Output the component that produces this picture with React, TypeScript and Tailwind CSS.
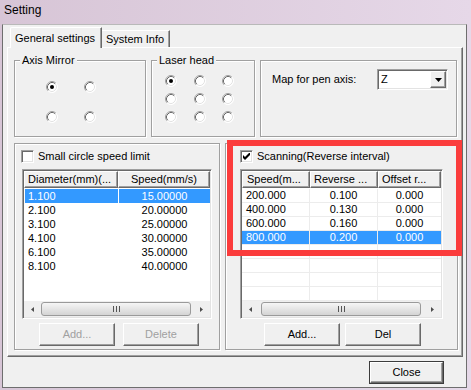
import React from 'react';

const raised =
  'border border-t-white border-l-white border-r-[#696969] border-b-[#696969] shadow-[inset_-1px_-1px_0_#a0a0a0]';
const sunken =
  'border border-t-[#a0a0a0] border-l-[#a0a0a0] border-r-white border-b-white shadow-[inset_1px_1px_0_#696969,inset_-1px_-1px_0_#e3e3e3] p-[1px]';
const etched = 'border border-[#a0a0a0] shadow-[inset_1px_1px_0_#fff,1px_1px_0_#fff]';

const Radio = ({ checked = false }: { checked?: boolean }) => (
  <svg width="12" height="12" viewBox="0 0 12 12" className="block">
    <circle cx="6" cy="6" r="5.5" fill="#fff" />
    <path d="M2.11 9.89A5.5 5.5 0 0 1 9.89 2.11" fill="none" stroke="#a0a0a0" />
    <path d="M9.89 2.11A5.5 5.5 0 0 1 2.11 9.89" fill="none" stroke="#fff" />
    <path d="M2.82 9.18A4.5 4.5 0 0 1 9.18 2.82" fill="none" stroke="#696969" />
    <path d="M9.18 2.82A4.5 4.5 0 0 1 2.82 9.18" fill="none" stroke="#e3e3e3" />
    {checked && <circle cx="6" cy="6" r="2" fill="#000" />}
  </svg>
);

const Checkbox = ({ checked = false }: { checked?: boolean }) => (
  <div className={`w-[13px] h-[13px] bg-white flex items-center justify-center ${sunken}`}>
    {checked && (
      <svg width="7" height="7" viewBox="0 0 7 7" className="block">
        <path d="M0 2L2 4L7 -1L7 2L2 7L0 5Z" fill="#000" />
      </svg>
    )}
  </div>
);

const Group = ({
  label,
  className,
  children,
}: {
  label?: string;
  className: string;
  children?: React.ReactNode;
}) => (
  <div className={`flex flex-col ${etched} ${className}`}>
    {label && (
      <div className="-mt-[8px] -mb-[6px] ml-[5px] self-start h-[14px] px-[2px] bg-[#f0f0f0] leading-[14px]">
        {label}
      </div>
    )}
    {children}
  </div>
);

const Button = ({
  children,
  disabled = false,
  className = '',
}: {
  children: React.ReactNode;
  disabled?: boolean;
  className?: string;
}) => (
  <div
    className={`w-[76px] h-[23px] flex items-center justify-center bg-[#f0f0f0] ${raised} ${
      disabled ? 'text-[#a0a0a0]' : ''
    } ${className}`}
  >
    {children}
  </div>
);

const Scrollbar = ({ thumb }: { thumb: string }) => (
  <div className="flex h-[16px] bg-[#efefef] shrink-0">
    <div className="w-[17px] flex items-center justify-center">
      <svg width="3" height="5" viewBox="0 0 3 5" className="block">
        <path d="M3 0L0 2.5L3 5Z" fill="#4d4d4d" />
      </svg>
    </div>
    <div
      className={`my-[1px] rounded-[3px] border border-[#9a9a9a] bg-linear-to-b from-[#f6f6f6] to-[#d4d4d4] flex items-center justify-center ${thumb}`}
    >
      <svg width="7" height="6" viewBox="0 0 7 6" className="block">
        <rect x="0" y="0" width="1" height="6" fill="#555" />
        <rect x="3" y="0" width="1" height="6" fill="#555" />
        <rect x="6" y="0" width="1" height="6" fill="#555" />
      </svg>
    </div>
    <div className="flex-1" />
    <div className="w-[17px] flex items-center justify-center">
      <svg width="3" height="5" viewBox="0 0 3 5" className="block">
        <path d="M0 0L3 2.5L0 5Z" fill="#4d4d4d" />
      </svg>
    </div>
  </div>
);

const headerCell = `flex items-center h-[17px] bg-[#f0f0f0] whitespace-nowrap overflow-hidden ${raised}`;

const diameterRows = [
  ['1.100', '15.00000'],
  ['2.100', '20.00000'],
  ['3.100', '25.00000'],
  ['4.100', '30.00000'],
  ['6.100', '35.00000'],
  ['8.100', '40.00000'],
];

const scanRows = [
  ['200.000', '0.100', '0.000'],
  ['400.000', '0.130', '0.000'],
  ['600.000', '0.160', '0.000'],
  ['800.000', '0.200', '0.000'],
];

const sel = 'bg-[#3399ff] text-white';

export default function App() {
  return (
    <div className="relative w-[471px] h-[390px] overflow-hidden bg-linear-to-r from-[#d7c5d6] to-[#e6d8e8] font-['Liberation_Sans',Arial,sans-serif] text-[11px] text-black">
      <div className="h-[24px] pl-[4px] pt-[3px] text-[12px] leading-[14px]">Setting</div>

      <div className="ml-[2px] w-[465px] h-[364px] bg-[#f0f0f0] border border-[#6e6e6e] border-t-[#b9b9b9] flex flex-col">
        {/* tabs */}
        <div className="flex items-end h-[20px] mt-[2px] ml-[7px]">
          <div className="relative -mb-[1px] h-[21px] w-[92px] pl-[4px] flex items-center bg-[#f0f0f0] border-t border-l border-r border-t-white border-l-white border-r-[#696969] shadow-[inset_-1px_0_0_#a0a0a0] rounded-tl-[2px]">
            General settings
          </div>
          <div className="h-[17px] w-[68px] pl-[4px] flex items-center border-t border-r border-t-white border-r-[#696969] shadow-[inset_-1px_0_0_#a0a0a0]">
            System Info
          </div>
        </div>

        {/* tab panel */}
        <div className="ml-[4px] w-[456px] h-[310px] bg-[#f0f0f0] border border-t-white border-l-white border-r-[#696969] border-b-[#696969] shadow-[inset_-1px_-1px_0_#a0a0a0] flex flex-col pl-[6px] pt-[12px]">
          <div className="flex items-start gap-[5px]">
            <Group label="Axis Mirror" className="w-[132px] h-[77px]">
              <div className="grid grid-cols-[38px_12px] gap-y-[18px] mt-[20px] ml-[31px]">
                <Radio checked />
                <Radio />
                <Radio />
                <Radio />
              </div>
            </Group>
            <Group label="Laser head" className="w-[104px] h-[77px]">
              <div className="grid grid-cols-[29px_28px_12px] gap-y-[6px] mt-[14px] ml-[13px]">
                <Radio checked />
                <Radio />
                <Radio />
                <Radio />
                <Radio />
                <Radio />
                <Radio />
                <Radio />
                <Radio />
              </div>
            </Group>
            <Group className="w-[197px] h-[77px]">
              <div className="flex items-center mt-[8px] pl-[11px]">
                <div className="w-[105px]">Map for pen axis:</div>
                <div className={`w-[71px] h-[21px] bg-white flex ${sunken}`}>
                  <div className="flex-1 pl-[2px] flex items-center">Z</div>
                  <div className={`w-[16px] h-[17px] bg-[#f0f0f0] flex items-center justify-center ${raised}`}>
                    <svg width="7" height="4" viewBox="0 0 7 4" className="block">
                      <path d="M0 0H7L3.5 4Z" fill="#000" />
                    </svg>
                  </div>
                </div>
              </div>
            </Group>
          </div>

          <div className="flex items-start gap-[5px] mt-[6px]">
            {/* small circle speed limit */}
            <Group className="w-[206px] h-[207px]">
              <div className="flex items-center h-[13px] mt-[6px] ml-[6px]">
                <Checkbox />
                <span className="ml-[4px] leading-[13px]">Small circle speed limit</span>
              </div>
              <div className={`mt-[6px] ml-[7px] w-[190px] h-[150px] bg-white flex flex-col ${sunken}`}>
                <div className="flex shrink-0">
                  <div className={`${headerCell} w-[94px] pl-[3px]`}>Diameter(mm)(...</div>
                  <div className={`${headerCell} w-[92px] justify-center`}>Speed(mm/s)</div>
                </div>
                <div className="flex-1 overflow-hidden pt-[1px]">
                  {diameterRows.map(([d, s], i) => (
                    <div key={d} className="flex h-[14px] leading-[14px]">
                      <div className={`w-[94px] pl-[3px] border-l border-white ${i === 0 ? sel : ''}`}>{d}</div>
                      <div className={`w-[92px] text-center border-l border-white ${i === 0 ? sel : ''}`}>{s}</div>
                    </div>
                  ))}
                </div>
                <Scrollbar thumb="w-[150px]" />
              </div>
              <div className="flex gap-[8px] mt-[4px] pl-[24px]">
                <Button disabled>Add...</Button>
                <Button disabled>Delete</Button>
              </div>
            </Group>

            {/* scanning */}
            <Group className="w-[233px] h-[207px]">
              <div className="flex items-center h-[13px] mt-[6px] ml-[14px]">
                <Checkbox checked />
                <span className="ml-[4px] leading-[13px]">Scanning(Reverse interval)</span>
              </div>
              <div className={`mt-[6px] ml-[14px] w-[203px] h-[150px] bg-white flex flex-col ${sunken}`}>
                <div className="flex shrink-0">
                  <div className={`${headerCell} w-[68px] pl-[4px]`}>Speed(m...</div>
                  <div className={`${headerCell} w-[68px] pl-[3px]`}>Reverse ...</div>
                  <div className={`${headerCell} w-[63px] pl-[3px]`}>Offset r...</div>
                </div>
                <div className="flex-1 overflow-hidden pt-[1px]">
                  {Array.from({ length: 8 }).map((_, i) => {
                    const r = scanRows[i];
                    const s = i === 3 ? sel : '';
                    return (
                      <div key={i} className="flex h-[14px] border-b border-[#ececec] leading-[13px]">
                        <div className={`w-[68px] pl-[4px] border-r border-[#ececec] ${s}`}>{r?.[0]}</div>
                        <div className={`w-[68px] text-center border-r border-[#ececec] ${s}`}>{r?.[1]}</div>
                        <div className={`w-[63px] text-center ${s}`}>{r?.[2]}</div>
                      </div>
                    );
                  })}
                </div>
                <Scrollbar thumb="ml-[2px] w-[160px]" />
              </div>
              <div className="flex gap-[5px] mt-[4px] pl-[38px]">
                <Button>Add...</Button>
                <Button>Del</Button>
              </div>
            </Group>
          </div>
        </div>

        <div className="flex justify-end pr-[22px] mt-[4px]">
          <div className="w-[75px] h-[23px] border border-[#3c3c3c]">
            <div className={`w-full h-full flex items-center justify-center bg-[#f0f0f0] ${raised}`}>Close</div>
          </div>
        </div>
      </div>

      {/* annotation frame */}
      <div className="absolute left-[227px] top-[140px] w-[235px] h-[116px] border-[6px] border-[#fb3c3c]" />
    </div>
  );
}
